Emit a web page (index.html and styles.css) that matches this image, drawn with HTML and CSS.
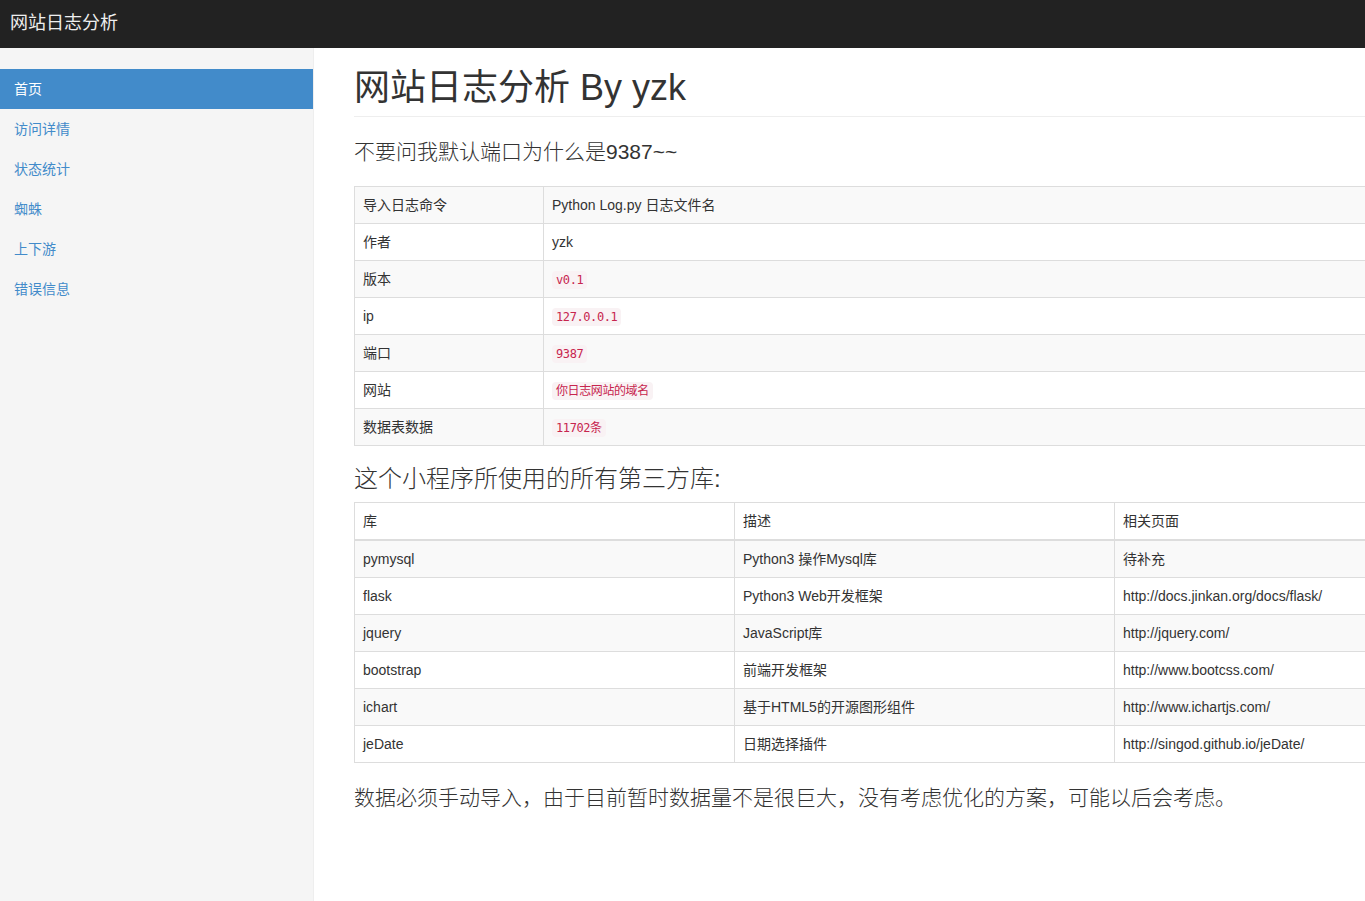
FILE: index.html
```html
<!DOCTYPE html>
<html lang="zh-CN">
<head>
<meta charset="utf-8">
<title>网站日志分析</title>
<link rel="stylesheet" href="styles.css">
</head>
<body>
<header class="navbar">
  <a class="brand" href="#">网站日志分析</a>
</header>
<div class="layout">
  <nav class="sidebar">
    <ul class="nav">
      <li><a class="active" href="#">首页</a></li>
      <li><a href="#">访问详情</a></li>
      <li><a href="#">状态统计</a></li>
      <li><a href="#">蜘蛛</a></li>
      <li><a href="#">上下游</a></li>
      <li><a href="#">错误信息</a></li>
    </ul>
  </nav>
  <main class="main">
    <h1 class="page-header">网站日志分析 By yzk</h1>
    <p class="lead">不要问我默认端口为什么是9387~~</p>
    <table class="table info">
      <colgroup><col class="c-label"><col></colgroup>
      <tbody>
        <tr><td>导入日志命令</td><td>Python Log.py 日志文件名</td></tr>
        <tr><td>作者</td><td>yzk</td></tr>
        <tr><td>版本</td><td><code>v0.1</code></td></tr>
        <tr><td>ip</td><td><code>127.0.0.1</code></td></tr>
        <tr><td>端口</td><td><code>9387</code></td></tr>
        <tr><td>网站</td><td><code>你日志网站的域名</code></td></tr>
        <tr><td>数据表数据</td><td><code>11702条</code></td></tr>
      </tbody>
    </table>
    <h3 class="sub">这个小程序所使用的所有第三方库:</h3>
    <table class="table libs">
      <colgroup><col class="c-third"><col class="c-third"><col class="c-third"></colgroup>
      <thead>
        <tr><th>库</th><th>描述</th><th>相关页面</th></tr>
      </thead>
      <tbody>
        <tr><td>pymysql</td><td>Python3 操作Mysql库</td><td>待补充</td></tr>
        <tr><td>flask</td><td>Python3 Web开发框架</td><td>http://docs.jinkan.org/docs/flask/</td></tr>
        <tr><td>jquery</td><td>JavaScript库</td><td>http://jquery.com/</td></tr>
        <tr><td>bootstrap</td><td>前端开发框架</td><td>http://www.bootcss.com/</td></tr>
        <tr><td>ichart</td><td>基于HTML5的开源图形组件</td><td>http://www.ichartjs.com/</td></tr>
        <tr><td>jeDate</td><td>日期选择插件</td><td>http://singod.github.io/jeDate/</td></tr>
      </tbody>
    </table>
    <p class="lead">数据必须手动导入，由于目前暂时数据量不是很巨大，没有考虑优化的方案，可能以后会考虑。</p>
  </main>
</div>
</body>
</html>
```

FILE: styles.css
```css
html, body {
  margin: 0;
  padding: 0;
  overflow-x: hidden;
}
body {
  font-family: "Liberation Sans", Arial, "Noto Sans CJK SC", sans-serif;
  font-size: 14px;
  line-height: 20px;
  color: #333;
  background: #fff;
}
.navbar {
  height: 48px;
  background: #222;
  box-sizing: border-box;
}
.brand {
  display: block;
  padding: 13px 10px 15px;
  font-size: 18px;
  line-height: 20px;
  color: #eee;
  text-decoration: none;
  width: max-content;
}
.layout {
  display: flex;
  min-height: 853px;
}
.sidebar {
  width: 313px;
  flex: 0 0 313px;
  background: #f5f5f5;
  border-right: 1px solid #eee;
  padding-top: 21px;
}
.nav {
  list-style: none;
  margin: 0;
  padding: 0;
}
.nav a {
  display: block;
  padding: 10px 14px;
  line-height: 20px;
  font-size: 14px;
  color: #428bca;
  text-decoration: none;
}
.nav a.active {
  background: #428bca;
  color: #fff;
}
.main {
  flex: 1;
  min-width: 0;
  overflow: hidden;
  padding: 20px 0 20px 40px;
}
.page-header {
  margin: 0 0 20px;
  padding-bottom: 9px;
  border-bottom: 1px solid #eee;
  font-size: 36px;
  line-height: 39px;
  font-weight: 400;
  color: #333;
}
.lead {
  margin: 0 0 20px;
  font-size: 21px;
  line-height: 29px;
  font-weight: 300;
}
.sub {
  margin: 20px 0 10px;
  font-size: 24px;
  line-height: 26px;
  font-weight: 300;
}
.table {
  width: 1140px;
  table-layout: fixed;
  border-collapse: collapse;
  border: 1px solid #ddd;
  margin-bottom: 20px;
}
.c-label { width: 189px; }
.c-third { width: 380px; }
.table td, .table th {
  padding: 8px;
  line-height: 20px;
  border: 1px solid #ddd;
  text-align: left;
  vertical-align: top;
  white-space: nowrap;
}
.table th {
  font-weight: 400;
  border-bottom-width: 2px;
}
.table tbody tr:nth-child(odd) {
  background: #f9f9f9;
}
code {
  font-family: "DejaVu Sans Mono", "Noto Sans CJK SC", monospace;
  font-size: 12px;
  line-height: 1;
  letter-spacing: -0.4px;
  padding: 2px 4px;
  color: #c7254e;
  background: #f9f2f4;
  border-radius: 4px;
}
```
